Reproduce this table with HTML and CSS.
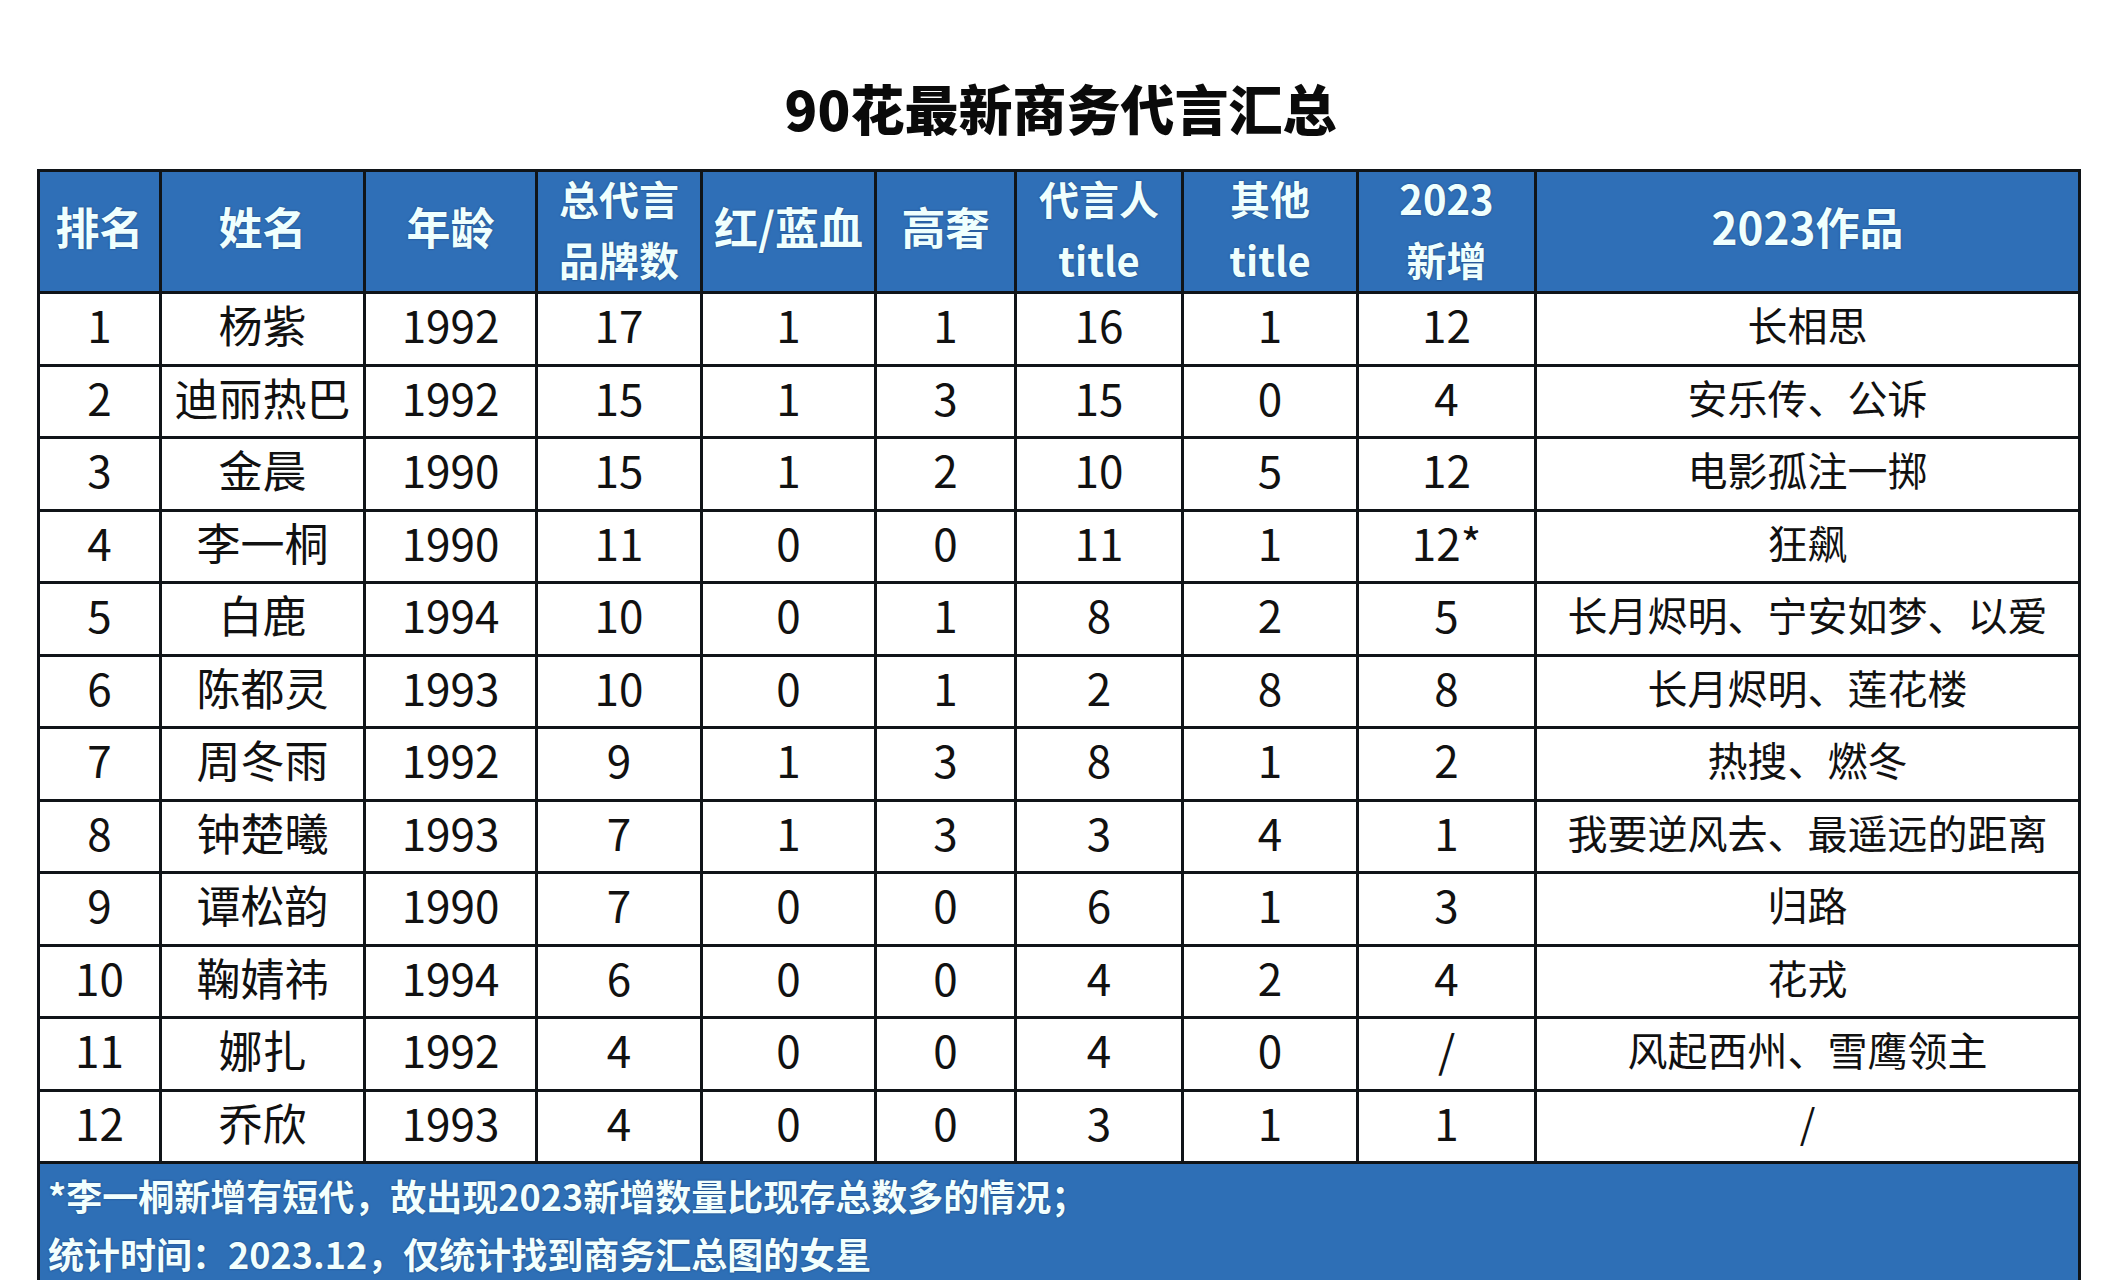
FILE: index.html
```html
<!DOCTYPE html>
<html lang="zh-CN">
<head>
<meta charset="utf-8">
<title>90花最新商务代言汇总</title>
<link rel="stylesheet" href="styles.css">
</head>
<body>
<div class="page">
  <h1 class="title">90花最新商务代言汇总</h1>
  <div class="sheet">
    <div class="hd">排名</div>
    <div class="hd">姓名</div>
    <div class="hd">年龄</div>
    <div class="hd two">总代言<br>品牌数</div>
    <div class="hd">红/蓝血</div>
    <div class="hd">高奢</div>
    <div class="hd two">代言人<br>title</div>
    <div class="hd two">其他<br>title</div>
    <div class="hd two">2023<br>新增</div>
    <div class="hd">2023作品</div>

    <div class="c">1</div><div class="c">杨紫</div><div class="c">1992</div><div class="c">17</div><div class="c">1</div><div class="c">1</div><div class="c">16</div><div class="c">1</div><div class="c">12</div><div class="c w">长相思</div>
    <div class="c">2</div><div class="c">迪丽热巴</div><div class="c">1992</div><div class="c">15</div><div class="c">1</div><div class="c">3</div><div class="c">15</div><div class="c">0</div><div class="c">4</div><div class="c w">安乐传、公诉</div>
    <div class="c">3</div><div class="c">金晨</div><div class="c">1990</div><div class="c">15</div><div class="c">1</div><div class="c">2</div><div class="c">10</div><div class="c">5</div><div class="c">12</div><div class="c w">电影孤注一掷</div>
    <div class="c">4</div><div class="c">李一桐</div><div class="c">1990</div><div class="c">11</div><div class="c">0</div><div class="c">0</div><div class="c">11</div><div class="c">1</div><div class="c">12*</div><div class="c w">狂飙</div>
    <div class="c">5</div><div class="c">白鹿</div><div class="c">1994</div><div class="c">10</div><div class="c">0</div><div class="c">1</div><div class="c">8</div><div class="c">2</div><div class="c">5</div><div class="c w">长月烬明、宁安如梦、以爱</div>
    <div class="c">6</div><div class="c">陈都灵</div><div class="c">1993</div><div class="c">10</div><div class="c">0</div><div class="c">1</div><div class="c">2</div><div class="c">8</div><div class="c">8</div><div class="c w">长月烬明、莲花楼</div>
    <div class="c">7</div><div class="c">周冬雨</div><div class="c">1992</div><div class="c">9</div><div class="c">1</div><div class="c">3</div><div class="c">8</div><div class="c">1</div><div class="c">2</div><div class="c w">热搜、燃冬</div>
    <div class="c">8</div><div class="c">钟楚曦</div><div class="c">1993</div><div class="c">7</div><div class="c">1</div><div class="c">3</div><div class="c">3</div><div class="c">4</div><div class="c">1</div><div class="c w">我要逆风去、最遥远的距离</div>
    <div class="c">9</div><div class="c">谭松韵</div><div class="c">1990</div><div class="c">7</div><div class="c">0</div><div class="c">0</div><div class="c">6</div><div class="c">1</div><div class="c">3</div><div class="c w">归路</div>
    <div class="c">10</div><div class="c">鞠婧祎</div><div class="c">1994</div><div class="c">6</div><div class="c">0</div><div class="c">0</div><div class="c">4</div><div class="c">2</div><div class="c">4</div><div class="c w">花戎</div>
    <div class="c">11</div><div class="c">娜扎</div><div class="c">1992</div><div class="c">4</div><div class="c">0</div><div class="c">0</div><div class="c">4</div><div class="c">0</div><div class="c">/</div><div class="c w">风起西州、雪鹰领主</div>
    <div class="c">12</div><div class="c">乔欣</div><div class="c">1993</div><div class="c">4</div><div class="c">0</div><div class="c">0</div><div class="c">3</div><div class="c">1</div><div class="c">1</div><div class="c w">/</div>

    <div class="foot">
      <p>*李一桐新增有短代，故出现2023新增数量比现存总数多的情况；</p>
      <p>统计时间：2023.12，仅统计找到商务汇总图的女星</p>
    </div>
  </div>
</div>
</body>
</html>
```
FILE: styles.css
```css
html, body {
  margin: 0;
  padding: 0;
  background: #ffffff;
  overflow: hidden;
}
body {
  width: 2121px;
  height: 1280px;
  font-family: "Noto Sans CJK SC", "Noto Sans", sans-serif;
}
.page {
  display: flex;
  flex-direction: column;
  padding-left: 37px;
}
.title {
  margin: 0;
  height: 169px;
  box-sizing: border-box;
  padding-top: 78px;
  padding-right: 37px;
  line-height: 60px;
  font-size: 54px;
  font-weight: 900;
  color: #0a0a0a;
  text-align: center;
}
.sheet {
  width: 2044px;
  box-sizing: border-box;
  display: grid;
  grid-template-columns: 119px 201px 169px 162px 171px 137px 164px 172px 175px 541px;
  grid-template-rows: 119px repeat(12, 69.5px) 160px;
  gap: 3px;
  padding: 3px 3px 0 3px;
  background: #101418;
}
.hd {
  background: #2f6fb7;
  color: #effffe;
  font-weight: 700;
  font-size: 44px;
  display: flex;
  align-items: center;
  justify-content: center;
  text-align: center;
  line-height: 1.2;
  white-space: nowrap;
  padding-bottom: 10px;
  box-sizing: border-box;
  text-shadow: 0 0 2px rgba(10, 30, 70, 0.6);
}
.hd.two {
  font-size: 40px;
  line-height: 61px;
  padding-bottom: 6px;
}
.c {
  background: #ffffff;
  color: #111111;
  font-size: 44px;
  display: flex;
  align-items: center;
  justify-content: center;
  white-space: nowrap;
  line-height: 1;
  padding-bottom: 9px;
  box-sizing: border-box;
}
.c.w {
  font-size: 40px;
}
.foot {
  grid-column: 1 / -1;
  background: #2e6fb6;
  padding: 2px 0 0 8px;
  color: #f2fffe;
  font-weight: 700;
  font-size: 36px;
  line-height: 58px;
  text-shadow: 0 0 2px rgba(10, 30, 70, 0.6);
}
.foot p {
  margin: 0;
  white-space: nowrap;
}
```
